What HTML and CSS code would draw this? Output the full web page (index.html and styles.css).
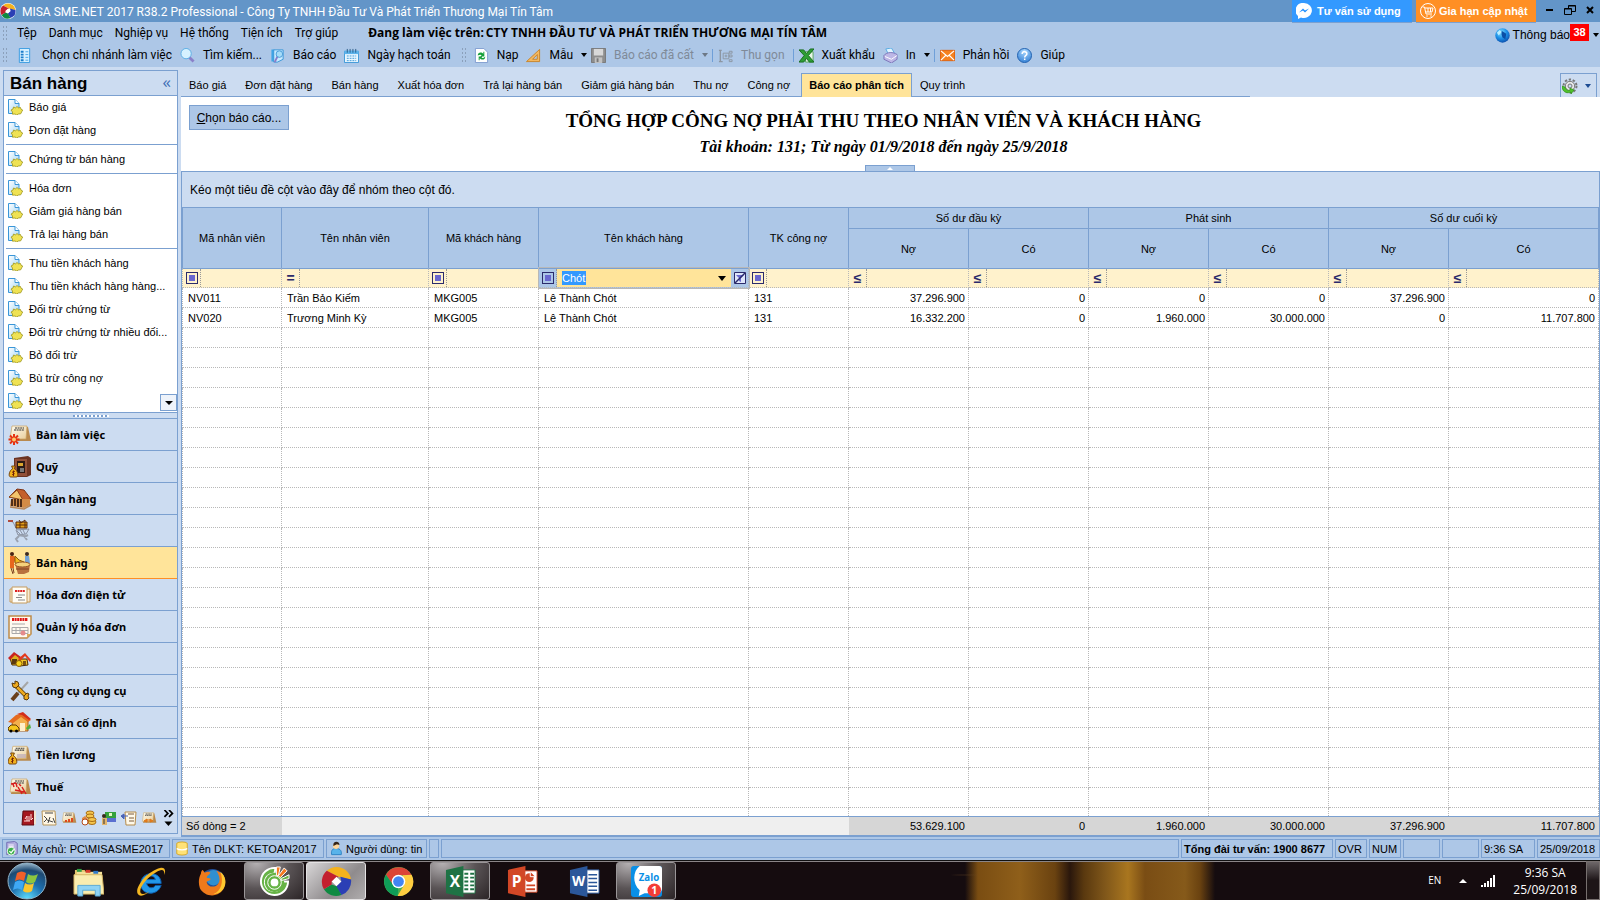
FILE: index.html
```html
<!DOCTYPE html>
<html lang="vi">
<head>
  <meta charset="UTF-8">
  <title>MISA SME.NET 2017 R38.2 Professional</title>
  <meta name="viewport" content="width=device-width, initial-scale=1.0">
  <link rel="stylesheet" href="styles.css">
</head>
<body>

<svg class="defs" aria-hidden="true">
  <defs>
    <linearGradient id="g-paper" x1="0" y1="0" x2="1" y2="1"><stop offset="0" stop-color="#fff"/><stop offset="1" stop-color="#9fd4f5"/></linearGradient>
    <radialGradient id="g-globe" cx=".4" cy=".3" r=".8"><stop offset="0" stop-color="#7fe0ff"/><stop offset=".5" stop-color="#1c8fe8"/><stop offset="1" stop-color="#083f9c"/></radialGradient>
    <radialGradient id="g-help" cx=".5" cy=".2" r=".9"><stop offset="0" stop-color="#a9d8ff"/><stop offset="1" stop-color="#2a78d0"/></radialGradient>
    <radialGradient id="g-orb" cx=".5" cy="1" r="1"><stop offset="0" stop-color="#5fe0ff"/><stop offset=".45" stop-color="#1d6fae"/><stop offset=".8" stop-color="#1e4a72"/><stop offset="1" stop-color="#9ab8cc"/></radialGradient>
    <linearGradient id="g-tan" x1="0" y1="0" x2="1" y2="1"><stop offset="0" stop-color="#fffdf2"/><stop offset="1" stop-color="#e9cf9c"/></linearGradient>
    <symbol id="i-doc" viewBox="0 0 16 16">
      <path d="M1.500.500h6.500l4 4v10H1.500z" fill="url(#g-paper)" stroke="#3a96d8"/>
      <path d="M8 .5v4h4" fill="#fff" stroke="#3a96d8"/>
      <path d="M4 11l2-1 .5-2 2 .8L10 7.500l1.500 1.300 2-.3.500 1.700 1.700.8-1 1.800-1 2-2.200.2L9.500 16 8 15l-2.500.2V13z" fill="#efe253" stroke="#9d951d" stroke-width=".8"/>
    </symbol>
    <symbol id="i-logo" viewBox="0 0 32 32">
      <path d="M16 1A15 15 0 0 1 31 14L18 11 6 5A15 15 0 0 1 16 1z" fill="#f5b21c"/>
      <path d="M31 14A15 15 0 0 1 21 30L15 21 21 16 20 11z" fill="#2b3fb5"/>
      <path d="M21 30A15 15 0 0 1 3 24L11 19 16 21z" fill="#0e8a41"/>
      <path d="M3 24A15 15 0 0 1 6 5L18 11 11 16 11 19z" fill="#c3202e"/>
      <path d="M16 11l5 5-5 5-5-5z" fill="#fff"/>
    </symbol>
    <symbol id="i-calnote" viewBox="0 0 24 20">
      <path d="M5 3h15l3 14H3z" fill="#b98a4e"/><path d="M4 2h15l-1 13H2z" fill="url(#g-tan)" stroke="#c9a25e" stroke-width=".7"/>
      <path d="M7 4h9M6 6h10" stroke="#333" stroke-width="1.200" stroke-dasharray="2 .6"/>
    </symbol>
    <symbol id="i-bag" viewBox="0 0 12 14">
      <path d="M4 1h4L7 4c4 2 5 9 2 9H3C0 13 1 6 5 4z" fill="#f2b11d" stroke="#6b3b09"/><path d="M7.500 7c-3-1-3 1.500-1.500 1.700S7 11 4.500 10.300M6 6v6" stroke="#6b1d09" fill="none"/>
    </symbol>
  </defs>
</svg>

<header class="titlebar">
  <svg class="app-logo" viewBox="0 0 32 32"><circle cx="16" cy="16" r="16" fill="#fff"/><use href="#i-logo"/></svg>
  <h1 class="app-title">MISA SME.NET 2017 R38.2 Professional - Công Ty TNHH Đầu Tư Và Phát Triển Thương Mại Tín Tâm</h1>
  <button class="promo promo-blue"><svg viewBox="0 0 16 16"><path d="M8 0a8 7.500 0 1 1-3 14.500L2 16v-3A7.500 7.500 0 0 1 8 0z" fill="#fff"/><path d="M3 9.500L7 5.500l2 2 4-2-4 4-2-2z" fill="#1b8cff"/></svg>Tư vấn sử dụng</button>
  <button class="promo promo-orange"><svg viewBox="0 0 16 16" fill="none" stroke="#fff"><circle cx="8" cy="8" r="7.500"/><path d="M2.500 4h2l1.500 7h6M5 5h8l-1 4H6M8 5v4M10.500 5v4"/><path d="M6.500 13h1M10.500 13h1" stroke-width="1.600"/></svg>Gia hạn cập nhật</button>
  <div class="win-buttons">
    <button aria-label="Minimize"><svg viewBox="0 0 12 12"><path d="M2 6h7" stroke="#000" stroke-width="2"/></svg></button>
    <button aria-label="Restore"><svg viewBox="0 0 12 12" fill="none" stroke="#000"><path d="M4.500 4V1.500h7v6H8M4.500 2h7"/><path d="M.5 4.500h7v6h-7zM.5 5h7"/></svg></button>
    <button aria-label="Close"><svg viewBox="0 0 12 12"><path d="M3 3l6 6M9 3l-6 6" stroke="#000" stroke-width="2"/></svg></button>
  </div>
</header>

<div class="bars">
  <div class="bars-left">
    <nav class="menu">
      <span class="grip"></span>
      <a href="#">Tệp</a><a href="#">Danh mục</a><a href="#">Nghiệp vụ</a><a href="#">Hệ thống</a><a href="#">Tiện ích</a><a href="#">Trợ giúp</a>
      <strong class="working">Đang làm việc trên:</strong><strong>CTY TNHH ĐẦU TƯ VÀ PHÁT TRIỂN THƯƠNG MẠI TÍN TÂM</strong>
    </nav>
    <div class="toolbar">
      <span class="grip"></span>
      <button class="tool-first"><svg viewBox="0 0 16 16"><path d="M2.500.500h11v15h-11z" fill="#d5efff" stroke="#3a9be0"/><path d="M4 4h3M4 7h3M4 10h3M4 13h3" stroke="#1c7ecb" stroke-width="2"/><path d="M9 4h3M9 7h3M9 10h3M9 13h3" stroke="#4aa6e6"/></svg>Chọn chi nhánh làm việc</button>
      <button><svg viewBox="0 0 16 16"><path d="M9.500 9.500l5 5" stroke="#8a80c9" stroke-width="3"/><circle cx="6.500" cy="6" r="5.500" fill="#d6f1ff" stroke="#5aade4"/></svg>Tìm kiếm...</button>
      <button><svg viewBox="0 0 16 16"><path d="M1.500 1.500h3l1 13h-4z" fill="#3fa4e6"/><path d="M4 2h10v10l-6 3H4z" fill="#c8eaff" stroke="#3a96d8"/><path d="M8 9l-3 6" stroke="#8a7bc8" stroke-width="2"/><circle cx="10" cy="6.500" r="3.500" fill="#a6dcf8" stroke="#4a9bd8"/></svg>Báo cáo</button>
      <button><svg viewBox="0 0 16 16"><path d="M.5 3.500h15v12H.5z" fill="#eaf7ff" stroke="#3a96d8"/><path d="M.5 3h15v3.500H.5z" fill="#5db4ec"/><path d="M3.500 1v4M6.500 1v4M9.500 1v4M12.500 1v4" stroke="#2b5d88"/><path d="M3 8.500h10M3 11h10M3 13.500h10" stroke="#3a96d8" stroke-dasharray="2 1"/></svg>Ngày hạch toán</button>
      <span class="grip"></span>
      <button><svg viewBox="0 0 16 16"><path d="M1.500.500h9l4 4v11h-13z" fill="#fff" stroke="#7f9cd0"/><path d="M4 8c0-4 4-4 6-2V4h1v5H6.500c3-1 1-3-2.500-1zM12 9c0 4-4 4-6 2v2H5V9h4c-2 1 0 3 3 0z" fill="#16a03a"/></svg>Nạp</button>
      <button class="has-caret"><svg viewBox="0 0 16 16"><path d="M.5 14.500L14.500 1.500v13z" fill="#f4b860" stroke="#c98325"/><path d="M7 12l5-5v5z" fill="#adc7e7" stroke="#c98325"/></svg>Mẫu<i class="caret"></i></button>
      <button class="has-caret" disabled><svg viewBox="0 0 16 16"><path d="M.5.500h15v15h-15z" fill="#8e8e8e" stroke="#777"/><path d="M3 1h10v7H3z" fill="#d8d8d8"/><path d="M4 10h8v6H4z" fill="#c2c2c2"/><path d="M6 11h2v4H6z" fill="#777"/></svg>Báo cáo đã cất<i class="caret"></i></button>
      <span class="sep"></span>
      <button disabled><svg viewBox="0 0 16 16" fill="none" stroke="#8c96a2"><path d="M1 2.500h3M2.500 2.500v12M1 14.500h4" stroke-width="1.500"/><path d="M5.500 5.500h6v6h-6zM7 8.500h3M8.500 7v3M12 3.500h3v2h-3zM12 7.500h3v2h-3zM12 12.500h3v2h-3z"/></svg>Thu gọn</button>
      <span class="sep"></span>
      <button><svg viewBox="0 0 16 16"><path d="M7 4h8v11H7z" fill="#e7f5e7" stroke="#58a65c"/><path d="M0 2h5l3 4 4-5h4l-6 7 6 7h-5l-3-4-3 4H0l5.500-7z" fill="#2f9e35" stroke="#176c1f"/></svg>Xuất khẩu</button>
      <button class="has-caret"><svg viewBox="0 0 16 16"><path d="M3 1l6-1 3 5-6 2z" fill="#e2f4ff" stroke="#58abe2"/><path d="M1 8c3-4 10-4 14-1v5l-6 4-8-4z" fill="#bdb7e6" stroke="#7c74b8"/><path d="M2 9l7 3 6-4" fill="none" stroke="#fff"/></svg>In<i class="caret"></i></button>
      <span class="sep"></span>
      <button><svg viewBox="0 0 16 16"><path d="M.5 2.500h15v11H.5z" fill="#f58220" stroke="#e05f0a"/><path d="M1 3l7 6 7-6M1 13l5-5M15 13l-5-5" fill="none" stroke="#fff" stroke-width="1.200"/></svg>Phản hồi</button>
      <button><svg viewBox="0 0 16 16"><circle cx="8" cy="8" r="7.500" fill="url(#g-help)" stroke="#1f5fae"/><path d="M5.500 6.500c0-4 5.500-3 5 0-.3 1.500-2.300 1.500-2.300 3.500M8.200 11.200v1.600" fill="none" stroke="#fff" stroke-width="1.600"/></svg>Giúp</button>
    </div>
  </div>
  <button class="notice"><svg viewBox="0 0 16 16"><circle cx="8" cy="8" r="7.700" fill="url(#g-globe)"/><path d="M7 3l5 3-1 6-3-2-1-3z" fill="#0a4fa6"/><path d="M2 5l3-3 2 2-3 4z" fill="#bdeeff"/></svg>Thông báo<span class="count">38</span><i class="caret"></i></button>
</div>

<div class="workspace">
  <aside class="sidebar">
    <div class="side-head"><h2>Bán hàng</h2><button aria-label="Thu gọn">«</button></div>
    <div class="side-list">
      <ul>
        <li><a href="#"><svg><use href="#i-doc"/></svg>Báo giá</a></li>
        <li><a href="#"><svg><use href="#i-doc"/></svg>Đơn đặt hàng</a></li>
      </ul>
      <ul>
        <li><a href="#"><svg><use href="#i-doc"/></svg>Chứng từ bán hàng</a></li>
      </ul>
      <ul>
        <li><a href="#"><svg><use href="#i-doc"/></svg>Hóa đơn</a></li>
        <li><a href="#"><svg><use href="#i-doc"/></svg>Giảm giá hàng bán</a></li>
        <li><a href="#"><svg><use href="#i-doc"/></svg>Trả lại hàng bán</a></li>
      </ul>
      <ul>
        <li><a href="#"><svg><use href="#i-doc"/></svg>Thu tiền khách hàng</a></li>
        <li><a href="#"><svg><use href="#i-doc"/></svg>Thu tiền khách hàng hàng...</a></li>
        <li><a href="#"><svg><use href="#i-doc"/></svg>Đối trừ chứng từ</a></li>
        <li><a href="#"><svg><use href="#i-doc"/></svg>Đối trừ chứng từ nhiều đối...</a></li>
        <li><a href="#"><svg><use href="#i-doc"/></svg>Bỏ đối trừ</a></li>
        <li><a href="#"><svg><use href="#i-doc"/></svg>Bù trừ công nợ</a></li>
        <li><a href="#"><svg><use href="#i-doc"/></svg>Đợt thu nợ</a></li>
      </ul>
      <button class="scroll-down" aria-label="Cuộn xuống"><i class="caret"></i></button>
    </div>
    <div class="splitter"></div>
    <nav class="modules">
      <a href="#"><svg viewBox="0 0 24 24"><use href="#i-calnote" y="1" width="24" height="20"/><path d="M6 11v11M.5 16.500h11M2 12.500l8 8M10 12.500l-8 8" stroke="#e63312" stroke-width="2"/><circle cx="6" cy="16.500" r="2" fill="#ffc76b"/></svg>Bàn làm việc</a>
      <a href="#"><svg viewBox="0 0 24 24"><path d="M6 3l14-2 3 2v17l-4 2H6z" fill="#6b3422"/><path d="M7 4h12v17H7z" fill="#915038"/><path d="M9 6h8v12H9z" fill="#2a1a16"/><path d="M10 8h5v3h-5z" fill="#d9a52f"/><path d="M12 13h4v4h-4z" fill="#777"/><use href="#i-bag" x="0" y="10" width="11" height="13"/></svg>Quỹ</a>
      <a href="#"><svg viewBox="0 0 24 24"><path d="M1 10L9 2l7 1 7 9-8 1z" fill="#c4602c" stroke="#7c3215"/><path d="M1 10l8-7 6 10z" fill="#f3c46b" stroke="#8c451c"/><path d="M3 12h12l7 0v6l-6 3-14-2z" fill="#d38b46"/><path d="M4 12v7M7 12v7M10 12v8M13 12v8" stroke="#3b1e10" stroke-width="1.700"/><path d="M2 20l14 2 7-4" stroke="#b8875a" fill="none" stroke-width="1.500"/></svg>Ngân hàng</a>
      <a href="#"><svg viewBox="0 0 24 24"><path d="M1 2l4 1 4 8M8 11l13-1-3 5-8 1zM9 12l4 4M12 11l3 5M15 11l2 4" fill="none" stroke="#8b93a5"/><path d="M8 3h11v6H8z" fill="#e5a21a" stroke="#5d2b08"/><path d="M11 1l2 3 4-3v8M12 3v6M8 6h11" fill="none" stroke="#5d2b08"/><path d="M10 16l6 1 3 4M11 17l-3 3 2 3M16 18l4-2" fill="none" stroke="#9aa2b0" stroke-width="2"/><path d="M0 2l5 0" stroke="#b04a3c" stroke-width="2"/></svg>Mua hàng</a>
      <a href="#" class="active"><svg viewBox="0 0 24 24"><circle cx="4" cy="3" r="2" fill="#4a2312"/><path d="M2 5h4l3 4-3 2v6H2z" fill="#e8671e"/><path d="M3 17l2 6M5 17l1 5" stroke="#7b3d1e"/><circle cx="19" cy="3" r="2" fill="#3c2a22"/><path d="M17 5h4l1 7h-5z" fill="#76a4d6"/><path d="M7 5l4 4 5 2-2 3-7-2z" fill="#f0b81e" stroke="#8a5a0b"/><path d="M7 13h15l-1 8-5 2H10z" fill="#b9713e"/><ellipse cx="14.500" cy="13.500" rx="7.500" ry="2.500" fill="#f5d27b" stroke="#965526"/><path d="M8 18h13" stroke="#7d4320"/></svg>Bán hàng</a>
      <a href="#"><svg viewBox="0 0 24 24"><path d="M2 6h20v13H2z" fill="#f8ead0" stroke="#c69b5d"/><path d="M4 4h15v16H4z" fill="#fffdf6" stroke="#c69b5d"/><path d="M7 8h10" stroke="#d22" stroke-width="2" stroke-dasharray="2 .6"/><path d="M10 12h7M8 14.500h6M10 17h7" stroke="#888"/></svg>Hóa đơn điện tử</a>
      <a href="#"><svg viewBox="0 0 24 24"><path d="M1 1h22v18l-4 4H1z" fill="#fffaf0" stroke="#bd8b49" stroke-width="1.500"/><path d="M4 4.500h16" stroke="#e01616" stroke-width="3" stroke-dasharray="2 .6"/><path d="M4 9h13M4 12.500h16v6H4zM8 12v6M12 12v6M4 15.500h16" stroke="#aaa" fill="none"/><circle cx="15" cy="18" r="2.500" fill="#e68b8b"/><path d="M19 23v-4h4z" fill="#dba95b"/></svg>Quản lý hóa đơn</a>
      <a href="#"><svg viewBox="0 0 24 24"><path d="M2 11l5-4 5 4v7l-8 0z" fill="#ddb01e" stroke="#4a2a09"/><path d="M0 11l6-6 7 5 1 3-7-5-5 5z" fill="#c92320"/><path d="M12 12h7l1 6-8 1z" fill="#f1c52a" stroke="#4a2a09"/><path d="M10 12l7-6 6 7-1 2-5-6-5 5z" fill="#e33a1e"/><path d="M4 12h5v5H4z" fill="#5b390e"/><circle cx="11" cy="16.500" r="3" fill="#f7d21c" stroke="#8a5f0a"/><path d="M15 14h3v4h-3z" fill="#7b5212"/></svg>Kho</a>
      <a href="#"><svg viewBox="0 0 24 24"><path d="M20 3L9 15" stroke="#a6a6a6" stroke-width="2"/><path d="M10 14l-6 7" stroke="#6a3f1b" stroke-width="4"/><path d="M7 6l11 11" stroke="#5b3b0b" stroke-width="4"/><path d="M7 6l11 11" stroke="#eda91e" stroke-width="2.500"/><path d="M5 8l-1-4 3 1V2l3 1 1 3-3 3zM16 17l3-3 2 1-1 2 1 2-2 2-3-1z" fill="#eda91e" stroke="#5b3b0b"/></svg>Công cụ dụng cụ</a>
      <a href="#"><svg viewBox="0 0 24 24"><path d="M4 10l8-6 8 6v10H5z" fill="#f3b04c" stroke="#a85f1a"/><path d="M0 11L8 4l7-2 8 7-3 2-7-5-8 6z" fill="#e56b1f"/><path d="M9 3l6-2 8 7-2 1-7-5z" fill="#d32e1c"/><path d="M12 12h5v8h-5z" fill="#fff0c8"/><path d="M0 17l3-3h5l3 3v3H1z" fill="#f5c51b" stroke="#5e3a06"/><circle cx="3" cy="20" r="1.500"/><circle cx="8.500" cy="20" r="1.500"/><path d="M18 17l4-4 1 4-4 2z" fill="#54ad3a"/></svg>Tài sản cố định</a>
      <a href="#"><svg viewBox="0 0 24 24"><use href="#i-calnote" x="1" y="1" width="23" height="20"/><path d="M9 12h9M9 14h9" stroke="#a9b"/><use href="#i-bag" x="-1" y="9" width="11" height="13"/></svg>Tiền lương</a>
      <a href="#"><svg viewBox="0 0 24 24"><use href="#i-calnote" y="2" width="24" height="20"/><path d="M3 9l5-1M5 9l1 3M8 8l1 4M11 9l2 2M7 15l9 2M10 12l4 7M14 12l4 7" stroke="#d81f1f" stroke-width="1.500"/></svg>Thuế</a>
    </nav>
    <div class="side-foot">
      <button aria-label="Sổ"><svg viewBox="0 0 16 16"><path d="M2 1h11v14H1z" fill="#a51820" stroke="#5e0c12"/><path d="M13 1h2v13l-2 1z" fill="#efe3d1"/><path d="M4 9l2-3v5M8 6v5M10 4v6l2-2M3 11h6" stroke="#ffd9d9" fill="none"/></svg></button>
      <button aria-label="Hợp đồng"><svg viewBox="0 0 16 16"><path d="M1 1h13l1 14H2z" fill="#fff7e6" stroke="#b89559"/><path d="M4 3h8M3 6l3 3-3 3M6 10l6 2M12 8l2 5M9 7l-2 6" stroke="#444" fill="none"/></svg></button>
      <button aria-label="Ngân sách"><svg viewBox="0 0 16 16"><use href="#i-calnote" y="1" width="16" height="14"/><path d="M5 12v-2M8 12v-3M11 12V8" stroke="#e0481c" stroke-width="2"/></svg></button>
      <button aria-label="Giá thành"><svg viewBox="0 0 16 16"><g fill="#f6c64d" stroke="#a96d12"><ellipse cx="9" cy="3" rx="4" ry="2"/><ellipse cx="9" cy="6" rx="4" ry="2"/><ellipse cx="11" cy="12" rx="4" ry="2.500"/><ellipse cx="11" cy="9.500" rx="4" ry="2"/></g><path d="M1 8l3-2 3 3v5H1z" fill="#e08a45"/><circle cx="4" cy="12" r="3" fill="#fff" stroke="#b54b1b"/></svg></button>
      <button aria-label="Cổ đông"><svg viewBox="0 0 16 16"><path d="M4 2h11v6H4z" fill="#35a13b"/><path d="M6 8h9v4H6z" fill="#5a6fd0"/><path d="M8 3h3v3H8z" fill="#e5f7c0"/><circle cx="3" cy="6" r="2" fill="#3b2a1c"/><path d="M1 8h5v7H1z" fill="#e3b56e"/><path d="M3 9v5" stroke="#333"/></svg></button>
      <button aria-label="Tổng hợp"><svg viewBox="0 0 16 16"><path d="M4 2h11l-1 13H5z" fill="#fff9e9" stroke="#b58b4a"/><path d="M0 6l3-2v5zM3 6h4" fill="#4962b8" stroke="#4962b8"/><path d="M7 4h6M8 8h5M8 11h5" stroke="#7a5a3a"/></svg></button>
      <button aria-label="Lịch"><svg viewBox="0 0 16 16"><use href="#i-calnote" y="1" width="16" height="14"/><path d="M3 11l3-2v3zM12 11L9 9v3zM6 10h3" fill="#e07a1c" stroke="#e07a1c"/></svg></button>
      <button aria-label="Thêm" class="more"><svg viewBox="0 0 10 14"><path d="M1 0l3 3-3 3M5 0l3 3-3 3" fill="none" stroke="#000" stroke-width="1.500"/><path d="M1 10h7l-3.500 4z"/></svg></button>
    </div>
  </aside>

  <main class="content">
    <div class="tabrow">
      <nav class="tabs">
        <a href="#">Báo giá</a><a href="#">Đơn đặt hàng</a><a href="#">Bán hàng</a><a href="#">Xuất hóa đơn</a><a href="#">Trả lại hàng bán</a><a href="#">Giảm giá hàng bán</a><a href="#">Thu nợ</a><a href="#">Công nợ</a><a href="#" class="active">Báo cáo phân tích</a><a href="#">Quy trình</a>
      </nav>
      <button class="gear" aria-label="Tùy chọn"><svg viewBox="0 0 16 16"><circle cx="8" cy="8" r="6.500" fill="none" stroke="#777" stroke-width="2" stroke-dasharray="2.300 1.780"/><circle cx="8" cy="8" r="4.700" fill="#e8e8e8" stroke="#777"/><circle cx="8" cy="8" r="2" fill="#ccdcf1" stroke="#777"/><path d="M0 8c0 6 5 8 9 6v2l3-4-4-2v2c-2 1-4 0-5-3z" fill="#4fc12b" stroke="#278a10" stroke-width=".6"/></svg><i class="caret"></i></button>
    </div>

    <section class="report-head">
      <button class="choose"><u>C</u>họn báo cáo...</button>
      <h2>TỔNG HỢP CÔNG NỢ PHẢI THU THEO NHÂN VIÊN VÀ KHÁCH HÀNG</h2>
      <p>Tài khoản: 131; Từ ngày 01/9/2018 đến ngày 25/9/2018</p>
      <button class="collapse" aria-label="Ẩn tham số"></button>
    </section>

    <section class="grid-box">
      <div class="group-panel">Kéo một tiêu đề cột vào đây để nhóm theo cột đó.</div>
      <div class="grid-scroll">
        <table class="grid">
          <colgroup><col class="c1"><col class="c2"><col class="c3"><col class="c4"><col class="c5"><col class="num"><col class="num"><col class="num"><col class="num"><col class="num"><col></colgroup>
          <thead>
            <tr class="h1"><th rowspan="2">Mã nhân viên</th><th rowspan="2">Tên nhân viên</th><th rowspan="2">Mã khách hàng</th><th rowspan="2">Tên khách hàng</th><th rowspan="2">TK công nợ</th><th colspan="2">Số dư đầu kỳ</th><th colspan="2">Phát sinh</th><th colspan="2">Số dư cuối kỳ</th></tr>
            <tr class="h2"><th>Nợ</th><th>Có</th><th>Nợ</th><th>Có</th><th>Nợ</th><th>Có</th></tr>
            <tr class="filters">
              <td><div class="filter"><button class="op box" aria-label="Chứa"></button><input aria-label="Lọc mã nhân viên"></div></td>
              <td><div class="filter"><button class="op">=</button><input aria-label="Lọc tên nhân viên"></div></td>
              <td><div class="filter"><button class="op box" aria-label="Chứa"></button><input aria-label="Lọc mã khách hàng"></div></td>
              <td class="editing"><div class="filter"><button class="op box" aria-label="Chứa"></button><div class="combo"><input aria-label="Lọc tên khách hàng" value="Chót"><button aria-label="Mở danh sách"><i class="caret"></i></button></div><button class="clear" aria-label="Bỏ lọc"><svg viewBox="0 0 12 12"><path d="M.5.500h11v11H.5z" fill="#dfe6fa" stroke="#2b2b6b"/><path d="M2 3h8L7 6v4L5 9V6z" fill="#6a68cf"/><path d="M1 11L11 1" stroke="#2b2b6b" stroke-width="1.500"/></svg></button></div></td>
              <td><div class="filter"><button class="op box" aria-label="Chứa"></button><input aria-label="Lọc TK công nợ"></div></td>
              <td><div class="filter"><button class="op">≤</button><input aria-label="Lọc nợ đầu kỳ"></div></td>
              <td><div class="filter"><button class="op">≤</button><input aria-label="Lọc có đầu kỳ"></div></td>
              <td><div class="filter"><button class="op">≤</button><input aria-label="Lọc phát sinh nợ"></div></td>
              <td><div class="filter"><button class="op">≤</button><input aria-label="Lọc phát sinh có"></div></td>
              <td><div class="filter"><button class="op">≤</button><input aria-label="Lọc nợ cuối kỳ"></div></td>
              <td><div class="filter"><button class="op">≤</button><input aria-label="Lọc có cuối kỳ"></div></td>
            </tr>
          </thead>
          <tbody id="rows">
            <tr><td>NV011</td><td>Trần Bảo Kiếm</td><td>MKG005</td><td>Lê Thành Chót</td><td>131</td><td>37.296.900</td><td>0</td><td>0</td><td>0</td><td>37.296.900</td><td>0</td></tr>
            <tr><td>NV020</td><td>Trương Minh Kỳ</td><td>MKG005</td><td>Lê Thành Chót</td><td>131</td><td>16.332.200</td><td>0</td><td>1.960.000</td><td>30.000.000</td><td>0</td><td>11.707.800</td></tr>
          </tbody>
        </table>
      </div>
      <table class="grid totals">
        <colgroup><col class="c1"><col class="c2"><col class="c3"><col class="c4"><col class="c5"><col class="num"><col class="num"><col class="num"><col class="num"><col class="num"><col></colgroup>
        <tbody><tr><td class="sum">Số dòng = 2</td><td></td><td></td><td></td><td></td><td class="sum">53.629.100</td><td class="sum">0</td><td class="sum">1.960.000</td><td class="sum">30.000.000</td><td class="sum">37.296.900</td><td class="sum">11.707.800</td></tr></tbody>
      </table>
    </section>
  </main>
</div>

<footer class="status">
  <span class="s-server"><svg viewBox="0 0 16 16"><path d="M2 1l9-1 3 2v12l-3 1H2z" fill="#b3aee0" stroke="#6b66ae"/><path d="M4 4h6M4 6h6" stroke="#fff"/><circle cx="7" cy="11" r="4.500" fill="#3bb04a" stroke="#fff"/><path d="M5 11l2 2 3-4" fill="none" stroke="#fff" stroke-width="1.500"/></svg>Máy chủ: PC\MISASME2017</span>
  <span class="s-db"><svg viewBox="0 0 16 16"><path d="M2 2c2-2 10-2 12 0v12c-2 2-10 2-12 0z" fill="#ffe276" stroke="#d4a31f"/><path d="M2 8c2 2 10 2 12 0" fill="none" stroke="#fff" stroke-width="1.500"/></svg>Tên DLKT: KETOAN2017</span>
  <span class="s-user"><svg viewBox="0 0 16 16"><path d="M3 15c-1-6 2-7 5-7s7 1 6 7z" fill="#58b3ea" stroke="#2a7fc0"/><circle cx="8" cy="5" r="3.500" fill="#ffd79b"/><path d="M5 5c-1-6 7-6 7-1L9 3z" fill="#332418"/></svg>Người dùng: tin</span>
  <span class="s-tiny"></span>
  <span class="s-fill"></span>
  <strong class="s-call">Tổng đài tư vấn: 1900 8677</strong>
  <span class="s-key">OVR</span>
  <span class="s-key">NUM</span>
  <span class="s-blank"></span>
  <span class="s-blank"></span>
  <span class="s-time">9:36 SA</span>
  <span class="s-date">25/09/2018</span>
</footer>

<div class="taskbar">
  <button class="orb" aria-label="Start"><svg viewBox="0 0 40 38"><ellipse cx="20" cy="19" rx="19" ry="18" fill="url(#g-orb)" stroke="#8fb3c8"/><path d="M10 11c3-2 6-2 9 0l-2 8c-3-2-6-2-9 0z" fill="#f0602a"/><path d="M21 12c3 2 6 2 10 0l-3 8c-3 2-6 2-9 0z" fill="#8cc63f"/><path d="M8 20c3-2 6-2 9 0l-2 8c-3-2-6-2-9 0z" fill="#3fa9f5"/><path d="M18 21c3 2 6 2 9 0l-2 8c-3 2-6 2-9 0z" fill="#fcc62d"/></svg></button>
  <button class="task" aria-label="Explorer"><svg viewBox="0 0 32 32"><path d="M2 4h10l2 3h15v22H2z" fill="#e6c66e"/><path d="M4 6h26v20H4z" fill="#f5e19a"/><path d="M1 9h29l2 20H1z" fill="#faedb0" stroke="#d4b563"/><path d="M4 3h5v3H4z" fill="#2f9e44"/><path d="M13 4h5v3h-5z" fill="#d83a2b"/><path d="M21 5h5v3h-5z" fill="#2f79c9"/><path d="M5 31V20h23v11h-5v-6H10v6z" fill="#8fd3f5" stroke="#5aa9d6"/></svg></button>
  <button class="task" aria-label="Internet Explorer"><svg viewBox="0 0 32 32"><path d="M27 18H12c1 5 7 6 9 2h6C23 32 5 30 6 18 6 5 27 4 27 18zM12 14h9c-1-5-8-5-9 0z" fill="#2298e8" stroke="#0c5eb0"/><path d="M4 30C-3 25 12 5 26 2c7-1 5 6 4 7 1-6-3-6-9-2C12 12 3 24 6 28c2 2 6 0 9-2-3 3-8 6-11 4z" fill="#f3b721"/></svg></button>
  <button class="task" aria-label="Firefox"><svg viewBox="0 0 32 32"><circle cx="16" cy="16" r="13" fill="#1f4f9a"/><circle cx="17" cy="12" r="8" fill="#2f8fd0"/><path d="M4 8c0-2 1-4 2-4l2 3c3-2 5-1 6 0-1 2-4 3-4 5l4 1c0 3-4 2-4 4 1 5 9 6 12 1 3-4 0-10-2-13 8 2 11 10 8 17-4 11-20 11-25 1-2-6-1-11 1-15z" fill="#ee7a1b"/><path d="M24 6c6 4 7 13 3 18-3 4-8 5-10 5 8-3 11-13 7-23z" fill="#fdc92f"/></svg></button>
  <button class="task running" aria-label="Cốc Cốc"><svg viewBox="0 0 32 32"><path d="M17 2A14 14 0 1 0 30 16L24 16A9 9 0 1 1 16 8z" fill="#67b346" stroke="#fff" stroke-width="2"/><circle cx="16" cy="17" r="10" fill="#67b346"/><circle cx="16" cy="17" r="7" fill="none" stroke="#fff"/><circle cx="16" cy="17" r="4" fill="#fff"/><path d="M18 1h4l-2 9h-2zM26 2l3 3-7 7-2-2z" fill="#f47a20" stroke="#fff"/><path d="M31 9v4l-8 2v-2z" fill="#67b346" stroke="#fff"/></svg></button>
  <button class="task current" aria-label="MISA SME.NET"><svg viewBox="0 0 32 32"><use href="#i-logo"/></svg></button>
  <button class="task" aria-label="Chrome"><svg viewBox="0 0 32 32"><circle cx="16" cy="16" r="15" fill="#4caf50"/><path d="M3 9A15 15 0 0 1 29.500 9.500H16L10 19z" fill="#db4437"/><path d="M29.500 9A15 15 0 0 1 15 31l7-12-2-9.500z" fill="#ffcd40"/><path d="M3 9l7 10 6 3-1 9A15 15 0 0 1 3 9z" fill="#0f9d58"/><circle cx="16" cy="16" r="7" fill="#fff"/><circle cx="16" cy="16" r="5.500" fill="#4285f4"/></svg></button>
  <button class="task running" aria-label="Excel"><svg viewBox="0 0 32 32"><path d="M17 4h14v24H17z" fill="#fff" stroke="#1f7244"/><path d="M20 8h4M20 12h4M20 16h4M20 20h4M20 24h4M26 8h4M26 12h4M26 16h4M26 20h4M26 24h4" stroke="#1f7244" stroke-width="2"/><path d="M1 4l18-4v32L1 28z" fill="#1f7244"/><text x="5" y="22">X</text></svg></button>
  <button class="task" aria-label="PowerPoint"><svg viewBox="0 0 32 32"><path d="M17 5h14v22H17z" fill="#fff" stroke="#d24726"/><circle cx="23" cy="12" r="4.500" fill="#d24726"/><path d="M24 6v5h5" stroke="#fff" fill="#d24726"/><path d="M20 20h9M20 24h9" stroke="#d24726" stroke-width="2"/><path d="M1 4l18-4v32L1 28z" fill="#d24726"/><text x="5" y="22">P</text></svg></button>
  <button class="task" aria-label="Word"><svg viewBox="0 0 32 32"><path d="M17 4h14v24H17z" fill="#fff" stroke="#2b579a"/><path d="M20 9h9M20 13h9M20 17h9M20 21h9M20 25h9" stroke="#2b579a" stroke-width="1.500"/><path d="M1 4l18-4v32L1 28z" fill="#2b579a"/><text x="3" y="21" class="word">W</text></svg></button>
  <button class="task running" aria-label="Zalo"><svg viewBox="0 0 32 32"><rect width="32" height="32" rx="3" fill="#0a8fe6"/><path d="M9 0h20q3 0 3 3v20q0 5-5 5H14l-6 3 1-6C1 18 2 5 9 0z" fill="#fff"/><text x="8" y="15" class="zalo">Zalo</text><circle cx="24" cy="25" r="7" fill="#f43d36"/><text x="21" y="29" class="one">1</text></svg></button>
  <div class="tray">
    <span class="lang">EN</span>
    <svg class="up" viewBox="0 0 8 4"><path d="M0 4l4-4 4 4z" fill="#fff"/></svg>
    <svg class="signal" viewBox="0 0 14 12"><path d="M1 12v-2M4 12V8M7 12V6M10 12V3M13 12V0" stroke="#fff" stroke-width="2"/></svg>
    <div class="clock">9:36 SA<br>25/09/2018</div>
    <button class="show-desktop" aria-label="Show desktop"></button>
  </div>
</div>

<script>
  // fill the rest of the grid with empty rows
  const rows = document.getElementById("rows");
  for (let i = 0; i < 60; i++) {
    const tr = rows.insertRow();
    for (let c = 0; c < 11; c++) tr.insertCell();
  }
</script>

</body>
</html>
```
FILE: styles.css
```css
*, *::before, *::after {
  box-sizing: border-box;
}
body {
  margin: 0;
  height: 100vh;
  display: flex;
  flex-direction: column;
  overflow: hidden;
  background: #ccdcf1;
  color: #000;
  font: 11px "Liberation Sans", Arial, sans-serif;
}
h1, h2, p, ul {
  margin: 0;
  padding: 0;
}
ul {
  list-style: none;
}
a {
  color: inherit;
  text-decoration: none;
}
button, input {
  font: inherit;
  color: inherit;
  border: 0;
  padding: 0;
  margin: 0;
  background: none;
}
svg {
  flex: none;
}
.defs {
  position: absolute;
  width: 0;
  height: 0;
}
.caret {
  border: 3px solid transparent;
  border-top: 4px solid #000;
  border-bottom: 0;
}

/* title bar */
.titlebar {
  display: flex;
  align-items: flex-start;
  height: 22px;
  background: #6395c8;
}
.app-logo {
  width: 16px;
  height: 16px;
  margin-top: 3px;
}
.app-title {
  flex: 1;
  padding-left: 6px;
  font: 12px/24px Roboto, "Noto Sans", sans-serif;
  color: #fff;
  white-space: nowrap;
}
.promo {
  display: flex;
  align-items: center;
  gap: 5px;
  width: 120px;
  height: 23px;
  margin-right: 4px;
  padding-left: 4px;
  border-bottom: 1px solid #7ba0d0;
  font-weight: bold;
  font-size: 11px;
  color: #fff;
  white-space: nowrap;
  z-index: 1;
}
.promo svg {
  width: 16px;
  height: 16px;
}
.promo-blue {
  background: #3399ff;
}
.promo-orange {
  background: #ff8f24;
  gap: 3px;
}
.win-buttons {
  display: flex;
  gap: 8px;
  padding: 4px 4px 0 4px;
}
.win-buttons button, .win-buttons svg {
  display: block;
  width: 12px;
  height: 12px;
}

/* menu and toolbar */
.bars {
  display: flex;
  justify-content: space-between;
  align-items: flex-start;
  height: 45px;
  background: #adc7e7;
  font: 12px Roboto, "Noto Sans", sans-serif;
  white-space: nowrap;
}
.menu, .toolbar {
  display: flex;
  align-items: center;
  height: 22px;
}
.menu {
  gap: 12px;
}
.menu strong {
  font: bold 12px/20px "Open Sans", "Noto Sans", sans-serif;
}
.working {
  margin-left: 18px;
  margin-right: -10px;
}
.grip {
  width: 5px;
  height: 17px;
  margin-left: 2px;
  background: radial-gradient(circle, #8ba0bb 1px, transparent 1px) 0 0 / 3px 4px;
}
.menu .grip {
  margin-right: -2px;
}
.toolbar {
  gap: 8px;
}
.toolbar button {
  display: flex;
  align-items: center;
  gap: 8px;
}
.toolbar .tool-first {
  gap: 10px;
  padding-left: 2px;
}
.toolbar svg {
  width: 15px;
  height: 15px;
}
.toolbar .has-caret {
  margin-right: -4px;
}
.toolbar button:disabled {
  color: #7f8a98;
}
.toolbar button:disabled .caret {
  border-top-color: #6d7886;
}
.sep {
  width: 1px;
  height: 13px;
  margin-right: -3px;
  background: #6f9fd8;
}
.notice {
  display: flex;
  align-items: center;
  height: 22px;
  margin-top: 2px;
  font: 12px "Liberation Sans", Arial, sans-serif;
}
.notice svg {
  width: 15px;
  height: 15px;
  margin-right: 3px;
}
.notice .count {
  align-self: flex-start;
  width: 19px;
  background: #f00;
  color: #fff;
  font-weight: bold;
  font-size: 11px;
  line-height: 17px;
}
.notice .caret {
  margin: 0 1px 0 4px;
}

.workspace {
  flex: 1;
  display: flex;
  min-height: 0;
}

/* left panel */
.sidebar {
  display: flex;
  flex-direction: column;
  width: 175px;
  margin: 3px;
  border: 1px solid #7ba0d0;
}
.side-head {
  display: flex;
  justify-content: space-between;
  align-items: center;
  height: 25px;
  padding: 1px 6px 0;
  border-bottom: 1px solid #7ba0d0;
}
.side-head h2 {
  font-size: 17px;
}
.side-head button {
  color: #3f6fb5;
  font: 17px/18px "Open Sans", sans-serif;
  padding-bottom: 3px;
}
.side-list {
  position: relative;
  flex: 1;
  min-height: 0;
  overflow: hidden;
  background: #fff;
  padding-left: 2px;
}
.side-list ul {
  padding: 0 0 2px;
}
.side-list ul + ul {
  border-top: 1px solid #7ba0d0;
  padding-top: 3px;
}
.side-list a {
  display: flex;
  align-items: center;
  gap: 6px;
  height: 23px;
  padding: 0 0 1px 1px;
  white-space: nowrap;
}
.side-list svg {
  width: 16px;
  height: 16px;
}
.scroll-down {
  position: absolute;
  right: 0;
  bottom: 1px;
  width: 17px;
  height: 17px;
  border: 1px solid #7ba0d0;
  background: #eef3fa;
  display: flex;
  align-items: center;
  justify-content: center;
}
.scroll-down .caret {
  border-width: 4px 4px 0;
}
.splitter {
  height: 7px;
  border: solid #7ba0d0;
  border-width: 1px 0;
  background: repeating-linear-gradient(90deg, #7ba0d0 0 2px, #fff 2px 4px) center / 36px 2px no-repeat;
}
.modules a {
  display: flex;
  align-items: center;
  gap: 4px;
  height: 32px;
  padding-left: 4px;
  border-bottom: 1px solid #7ba0d0;
  font: bold 11px "Noto Sans", sans-serif;
}
.modules a.active {
  background: #ffe49a;
  border-bottom-color: #ff8f24;
}
.modules svg {
  width: 24px;
  height: 24px;
}
.side-foot {
  display: flex;
  align-items: center;
  gap: 4px;
  height: 30px;
  padding-left: 17px;
}
.side-foot button, .side-foot svg {
  display: block;
  width: 16px;
  height: 16px;
}

/* content */
.content {
  flex: 1;
  display: flex;
  flex-direction: column;
  min-width: 0;
}
.tabrow {
  display: flex;
  justify-content: space-between;
  align-items: flex-end;
  height: 30px;
  padding-right: 3px;
}
.tabs {
  display: flex;
  gap: 3px;
  width: 1069px;
  height: 24px;
  border-bottom: 1px solid #7ba0d0;
  white-space: nowrap;
}
.tabs a {
  padding: 0 8px;
  line-height: 24px;
}
.tabs a.active {
  height: 24px;
  padding: 0 7px;
  border: solid #7ba0d0;
  border-width: 1px 1px 0;
  background: #ffe49a;
  line-height: 22px;
  font-weight: bold;
}
.tabs a.active + a {
  padding-left: 5px;
}
.gear {
  display: flex;
  align-items: center;
  gap: 7px;
  width: 37px;
  height: 24px;
  padding-left: 1px;
  border: 1px solid #7ba0d0;
  border-bottom: 0;
}
.gear svg {
  width: 16px;
  height: 16px;
}
.gear .caret {
  border-top-color: #1d4c93;
}
.report-head {
  position: relative;
  height: 74px;
  padding: 13px 14px 0 0;
  background: #fff;
  text-align: center;
  font-family: "Liberation Serif", "Times New Roman", serif;
}
.report-head h2 {
  font-size: 19px;
  line-height: 22px;
}
.report-head p {
  margin-top: 5px;
  font: italic bold 16px/20px "Liberation Serif", "Times New Roman", serif;
}
.choose {
  position: absolute;
  left: 8px;
  top: 8px;
  width: 100px;
  height: 25px;
  background: #adc7e7;
  border: 1px solid #7ba0d0;
  font: 12px "Liberation Sans", Arial, sans-serif;
}
.collapse {
  position: absolute;
  left: 50%;
  bottom: 0;
  width: 50px;
  height: 6px;
  margin-left: -26px;
  background: #adc7e7;
  border: 1px solid #7ba0d0;
  border-bottom: 0;
}
.collapse::after {
  content: "";
  display: block;
  width: 0;
  margin: 0 auto;
  border: 3px solid transparent;
  border-top: 0;
  border-bottom-color: #fff;
}

.grid-box {
  flex: 1;
  display: flex;
  flex-direction: column;
  min-height: 0;
  border: solid #7ba0d0;
  border-width: 1px 1px 2px;
}
.group-panel {
  height: 35px;
  padding-left: 8px;
  font-size: 12px;
  line-height: 36px;
}
.grid-scroll {
  flex: 1;
  min-height: 0;
  overflow: hidden;
  background: #fff;
}
.grid {
  width: 100%;
  table-layout: fixed;
  border-collapse: separate;
  border-spacing: 0;
}
.c1 { width: 100px; }
.c2 { width: 147px; }
.c3 { width: 110px; }
.c4 { width: 210px; }
.c5 { width: 100px; }
.num { width: 120px; }
.grid th {
  padding: 0;
  background: #adc7e7;
  border: solid #7ba0d0;
  border-width: 1px 1px 0 0;
  font-weight: normal;
}
.grid thead th:first-child {
  border-left: 1px solid #7ba0d0;
}
.grid .h2 th:first-child {
  border-left: 0;
}
.h1 th {
  height: 21px;
}
.h2 th {
  height: 40px;
}
.grid td {
  height: 20px;
  padding: 0 3px 0 5px;
  border: dotted #b8b8b8;
  border-width: 0 1px 1px 0;
  white-space: nowrap;
}
.grid td:nth-child(n+6) {
  text-align: right;
}
.grid td:first-child {
  border-left-width: 1px;
}
.grid .filters td {
  padding: 0;
  background: #fff2cc;
  border-top: 1px solid #7ba0d0;
}
.filter {
  display: flex;
  align-items: center;
  height: 18px;
}
.filter input {
  flex: 1;
  width: 0;
  align-self: stretch;
  outline: 0;
}
.op {
  display: flex;
  align-items: center;
  justify-content: center;
  width: 18px;
  align-self: stretch;
  border-right: 1px dotted #999;
  color: #2b2b6b;
  font: bold 14px "Liberation Sans", sans-serif;
}
.op.box::after {
  content: "";
  width: 12px;
  height: 12px;
  padding: 2px;
  border: 1px solid #2b2b6b;
  background: #6a68cf content-box;
}
.grid .filters .editing {
  background: #adc7e7;
  outline: 1px solid #b8b8b8;
}
.combo {
  flex: 1;
  display: flex;
  align-items: center;
  align-self: stretch;
  justify-content: space-between;
  padding: 0 5px;
  background: #ffe49a;
}
.combo input {
  flex: none;
  align-self: center;
  width: 24px;
  height: 14px;
  background: #3399ff;
  color: #fff;
}
.combo button {
  display: flex;
}
.combo .caret {
  border-width: 5px 4px 0;
}
.clear {
  width: 17px;
  height: 12px;
}
.clear svg {
  display: block;
  width: 12px;
  height: 12px;
  margin: 0 auto;
}
.totals {
  background: #efefef;
  border-top: 1px solid #7ba0d0;
}
.grid.totals td {
  height: 18px;
  border: 0;
  padding: 0 4px;
}
.grid.totals .sum {
  background: #d6d6d6;
}

/* status bar */
.status {
  display: flex;
  gap: 2px;
  height: 23px;
  padding: 2px 0 2px 2px;
  background: #adc7e7;
  white-space: nowrap;
}
.status span, .status strong {
  display: flex;
  align-items: center;
  gap: 3px;
  height: 19px;
  padding-left: 2px;
  border: 1px solid #7ba0d0;
  font-size: 11px;
}
.status svg {
  width: 14px;
  height: 15px;
}
.s-server { width: 168px; }
.s-db { width: 152px; }
.s-user { width: 101px; }
.s-tiny { width: 10px; }
.s-fill { flex: 1; }
.s-call { width: 152px; }
.s-key { width: 32px; }
.s-blank { width: 37px; }
.s-time { width: 54px; }
.s-date { width: 63px; }

/* windows taskbar */
.taskbar {
  display: flex;
  height: 40px;
  padding-left: 7px;
  border-top: 1px solid #111;
  box-shadow: inset 0 1px #8a8587;
  background:
    radial-gradient(ellipse at 965px 14px, #6b4a26, transparent 24px),
    linear-gradient(90deg, transparent 965px, #7a4d12 978px, #8f5f1a 1020px, #6a4210 1055px, #2a170c 1070px, #5a390f 1084px, #80571a 1105px, #a9761f 1128px, #7a4d14 1145px, #865a1a 1185px, #6a4210 1200px, transparent 1215px),
    #150c0f;
}
.taskbar button {
  display: flex;
  align-items: center;
  justify-content: center;
}
.orb svg {
  width: 40px;
  height: 38px;
}
.orb {
  margin-right: 10px;
}
.task {
  width: 60px;
  height: 38px;
  margin: 1px 1px 0;
  border: 1px solid transparent;
  border-radius: 3px;
}
.task svg {
  width: 31px;
  height: 31px;
}
.task text {
  font: bold 16px "Open Sans", sans-serif;
  fill: #fff;
}
.task .word {
  font-size: 14px;
}
.task .zalo {
  font-size: 10px;
  fill: #0a8fe6;
}
.task .one {
  font-size: 11px;
}
.running {
  border-color: #9a9698;
  background: radial-gradient(ellipse at 20% 0, #b5b1b3, #5a5456 50%, #2c2527);
}
.current {
  border-color: #e4e2e3;
  background: linear-gradient(135deg, #d8d6d7, #8f8b8d 60%, #b0adae);
}
.tray {
  display: flex;
  align-items: center;
  margin-left: auto;
  color: #fff;
  font: 12px/17px "Open Sans", sans-serif;
}
.lang {
  margin-right: 18px;
  font-size: 10px;
}
.up {
  width: 8px;
  height: 4px;
  margin-right: 14px;
}
.signal {
  width: 14px;
  height: 12px;
  margin-right: 18px;
}
.clock {
  text-align: center;
}
.show-desktop {
  width: 14px;
  height: 39px;
  margin-left: 9px;
  border: 1px solid #77706f;
  background: linear-gradient(#6d6769, #1d1517 50%);
}
```
